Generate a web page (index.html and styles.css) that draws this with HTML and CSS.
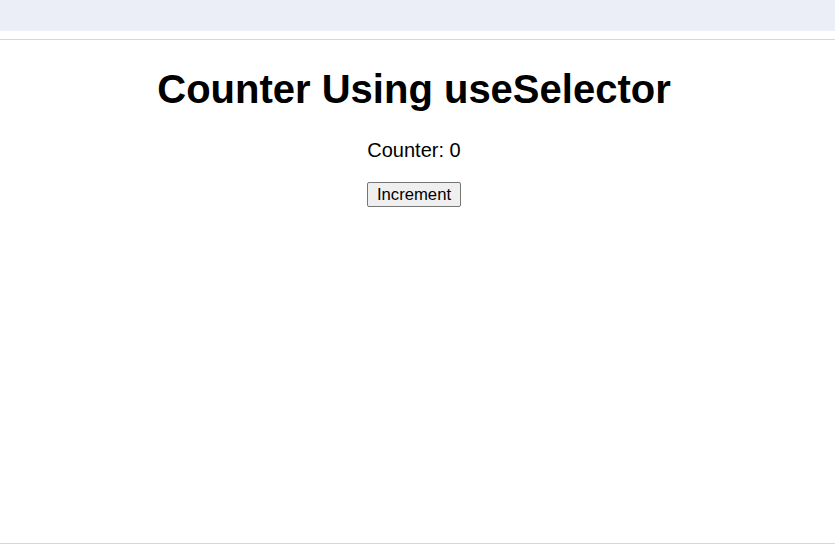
FILE: index.html
```html
<!DOCTYPE html>
<html>
<head>
<meta charset="utf-8">
<link rel="stylesheet" href="styles.css">
</head>
<body>
<div class="topbar"></div>
<div class="frame">
  <div class="app">
    <h1 class="title">Counter Using useSelector</h1>
    <p class="count">Counter: 0</p>
    <button class="btn">Increment</button>
  </div>
</div>
</body>
</html>
```
FILE: styles.css
```css
html, body {
  margin: 0;
  padding: 0;
  height: 100%;
  background: #fff;
  font-family: "Liberation Sans", Arial, sans-serif;
}
body {
  display: flex;
  flex-direction: column;
}
.topbar {
  height: 31px;
  background: #ebeef7;
  flex: none;
}
.frame {
  margin-top: 8px;
  border-top: 1px solid #d6d6d6;
  border-bottom: 1px solid #d6d6d6;
  flex: 1;
  box-sizing: border-box;
}
.app {
  text-align: center;
  padding-top: 1px;
  padding-right: 7px;
}
.title {
  font-size: 40px;
  font-weight: bold;
  margin: 25px 0 0;
  line-height: 46px;
  color: #000;
}
.count {
  font-size: 20px;
  margin: 26px 0 0;
  line-height: 24px;
  color: #000;
}
.btn {
  margin-top: 20px;
  font-family: "Liberation Sans", Arial, sans-serif;
  font-size: 16.67px;
  line-height: 19px;
  padding: 2px 9px;
  background: #efefef;
  border: 1px solid #767676;
  border-radius: 2px;
  color: #000;
}
```
